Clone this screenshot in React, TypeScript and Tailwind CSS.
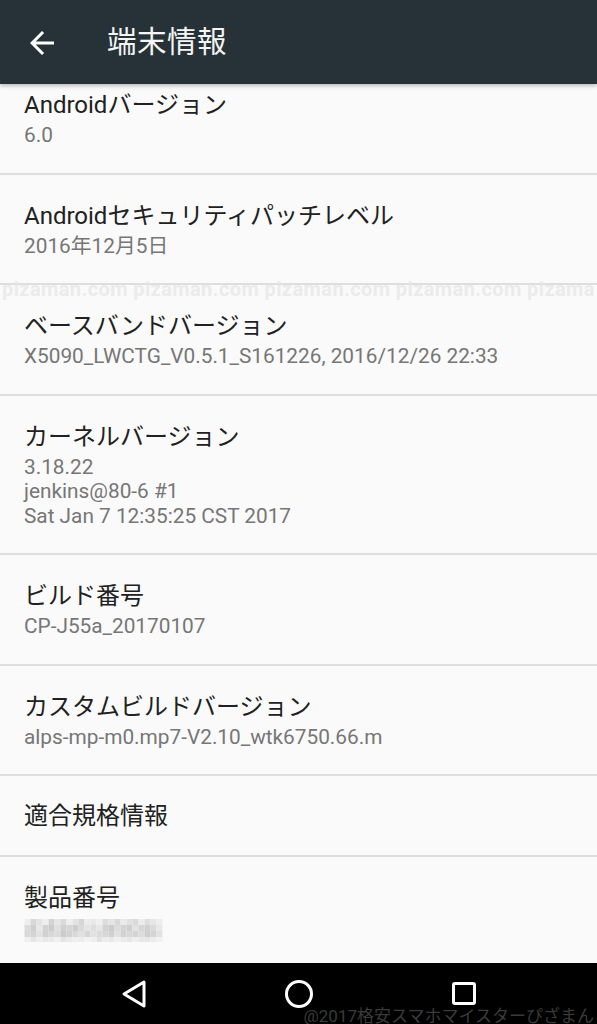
import React from 'react';

const FONT = { fontFamily: 'Roboto, "Noto Sans CJK JP", sans-serif' };

interface Item {
    title: string;
    lines?: string[];
    mosaic?: boolean;
}

const items: Item[] = [
    { title: 'Androidバージョン', lines: ['6.0'] },
    { title: 'Androidセキュリティパッチレベル', lines: ['2016年12月5日'] },
    { title: 'ベースバンドバージョン', lines: ['X5090_LWCTG_V0.5.1_S161226, 2016/12/26 22:33'] },
    { title: 'カーネルバージョン', lines: ['3.18.22', 'jenkins@80-6 #1', 'Sat Jan 7 12:35:25 CST 2017'] },
    { title: 'ビルド番号', lines: ['CP-J55a_20170107'] },
    { title: 'カスタムビルドバージョン', lines: ['alps-mp-m0.mp7-V2.10_wtk6750.66.m'] },
    { title: '適合規格情報' },
    { title: '製品番号', mosaic: true },
];

// shades for the blurred serial number, 4 rows x 23 cols
const shades = [
    'eeeeee,d8d8d8,e4e4e4,eeeeee,d4d4d4,e6e6e6,dadada,eeeeee,e2e2e2,d6d6d6,ececec,e8e8e8,f0f0f0,dcdcdc,e4e4e4,d8d8d8,eaeaea,e0e0e0,dadada,ececec,dedede,e6e6e6,eeeeee',
    'dcdcdc,cfcfcf,e8e8e8,d2d2d2,cccccc,e0e0e0,d0d0d0,d6d6d6,cdcdcd,dadada,e4e4e4,dedede,e6e6e6,d2d2d2,cccccc,dcdcdc,d4d4d4,cfcfcf,e2e2e2,d6d6d6,d0d0d0,dadada,e8e8e8',
    'd8d8d8,d4d4d4,e2e2e2,d0d0d0,d8d8d8,dcdcdc,cccccc,d2d2d2,d8d8d8,e0e0e0,d6d6d6,e2e2e2,dcdcdc,d6d6d6,d0d0d0,e0e0e0,d2d2d2,d8d8d8,d4d4d4,dcdcdc,cfcfcf,d4d4d4,e2e2e2',
    'f0f0f0,e6e6e6,eeeeee,e8e8e8,eaeaea,f0f0f0,e4e4e4,eaeaea,eeeeee,ececec,f2f2f2,eeeeee,e2e2e2,ececec,e8e8e8,f0f0f0,eaeaea,e6e6e6,eeeeee,e8e8e8,e6e6e6,ececec,f2f2f2',
].map((r) => r.split(','));

function Mosaic() {
    return (
        <svg width="139" height="23" viewBox="0 0 138 23" className="block">
            {shades.map((row, y) =>
                row.map((c, x) => (
                    <rect key={`${x}-${y}`} x={x * 6} y={y * 6} width="6" height="6" fill={`#${c}`} />
                ))
            )}
        </svg>
    );
}

function Row({ item, first }: { item: Item; first: boolean }) {
    const single = !item.lines && !item.mosaic;
    return (
        <div
            className={
                'border-b-2 border-[#dedede] px-6 ' +
                (first ? 'pt-[4px] pb-[25px]' : single ? 'pt-[23px] pb-[22px]' : 'pt-[24px] pb-[25px]')
            }
        >
            <div className="text-[24px] leading-[34px] text-[#212121] whitespace-nowrap">{item.title}</div>
            {item.lines && (
                <div className="pt-[1px]">
                    {item.lines.map((l) => (
                        <div key={l} className="text-[20.8px] leading-[24.5px] text-[#767676] whitespace-nowrap">
                            {l}
                        </div>
                    ))}
                </div>
            )}
            {item.mosaic && (
                <div className="pt-[4px]">
                    <Mosaic />
                </div>
            )}
        </div>
    );
}

export default function App() {
    return (
        <div className="w-[597px] h-[1024px] flex flex-col overflow-hidden bg-[#fafafa]" style={FONT}>
            <header className="relative z-10 h-[84px] shrink-0 bg-[#263238] flex items-center shadow-[0_2px_4px_rgba(0,0,0,0.25)]">
                <svg width="36" height="36" viewBox="0 0 24 24" className="ml-6 mt-[2px]" fill="#ffffff">
                    <path d="M20 11H7.83l5.59-5.59L12 4l-8 8 8 8 1.41-1.41L7.83 13H20v-2z" />
                </svg>
                <h1 className="ml-[47px] text-[29.5px] text-[#f5f5f5] tracking-[0.5px]">端末情報</h1>
            </header>

            <main className="relative flex-1 overflow-hidden">
                {items.map((it, i) => (
                    <Row key={it.title} item={it} first={i === 0} />
                ))}
                {/* site watermark across the list */}
                <div className="absolute inset-x-0 top-[190px] pl-[2px] overflow-hidden text-[20px] font-bold text-[#ebebeb] whitespace-nowrap tracking-[0.4px] pointer-events-none">
                    pizaman.com pizaman.com pizaman.com pizaman.com pizama
                </div>
            </main>

            <nav className="relative h-[61px] shrink-0 bg-black flex items-center justify-center gap-[93px] overflow-hidden">
                <div className="w-[72px] flex justify-center">
                    <svg width="28" height="30" viewBox="0 0 28 30">
                        <path d="M24 3 L4 15 L24 27 Z" fill="none" stroke="#fff" strokeWidth="3" strokeLinejoin="round" />
                    </svg>
                </div>
                <div className="w-[72px] flex justify-center">
                    <svg width="30" height="30" viewBox="0 0 30 30">
                        <circle cx="15" cy="15" r="12.5" fill="none" stroke="#fff" strokeWidth="3" />
                    </svg>
                </div>
                <div className="w-[72px] flex justify-center">
                    <svg width="26" height="26" viewBox="0 0 26 26">
                        <rect x="2.5" y="2.5" width="21" height="20" rx="1.5" fill="none" stroke="#fff" strokeWidth="3" />
                    </svg>
                </div>
                <div className="absolute right-[3px] bottom-[-5px] text-[17px] text-[#3a3a3a] whitespace-nowrap">
                    @2017格安スマホマイスターぴざまん
                </div>
            </nav>
        </div>
    );
}
